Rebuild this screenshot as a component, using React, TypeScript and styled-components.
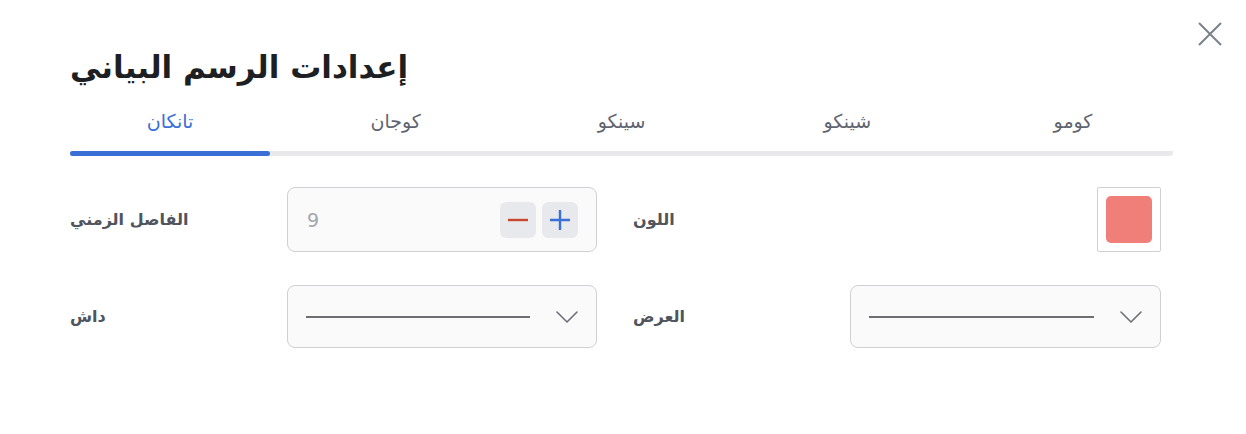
import React, { useState } from "react";
import styled, { createGlobalStyle } from "styled-components";

const GlobalStyle = createGlobalStyle`
  html, body {
    margin: 0;
    padding: 0;
    background: #ffffff;
    font-family: "DejaVu Sans", "Noto Sans", sans-serif;
  }
`;

const Dialog = styled.div`
  position: relative;
  width: 1246px;
  height: 434px;
  box-sizing: border-box;
  padding: 45px 73px 0 70px;
  background: #fff;
`;

const CloseButton = styled.button`
  position: absolute;
  top: 22px;
  right: 24px;
  width: 24px;
  height: 24px;
  padding: 0;
  border: none;
  background: transparent;
  color: #7c808a;
  cursor: pointer;
  display: flex;
  align-items: center;
  justify-content: center;
`;

const Title = styled.h1`
  margin: 0;
  font-size: 31px;
  font-weight: 700;
  color: #1d1f23;
  line-height: 44px;
`;

const Tabs = styled.div`
  margin-top: 20px;
  display: flex;
  justify-content: space-between;
  background: linear-gradient(#e9e9eb, #e9e9eb) no-repeat left bottom / 100% 5px;
  border-radius: 3px;
`;

const Tab = styled.button<{ $active: boolean }>`
  width: 200px;
  border: none;
  background: transparent;
  padding: 0;
  font-family: inherit;
  font-size: 19px;
  color: ${(p) => (p.$active ? "#3a6fd6" : "#5f6470")};
  cursor: pointer;
  &::after {
    content: "";
    display: block;
    height: 5px;
    margin-top: 18px;
    border-radius: 3px;
    background: ${(p) => (p.$active ? "#3a6fd6" : "transparent")};
  }
`;

const TabLabel = styled.span`
  display: block;
  line-height: 24px;
`;

const Form = styled.div`
  margin-top: 31px;
  width: 1091px;
  display: grid;
  grid-template-columns: 217px 310px 36px 217px 311px;
  row-gap: 33px;
  align-items: center;
`;

const Label = styled.label<{ $col: number }>`
  grid-column: ${(p) => p.$col};
  font-size: 16px;
  font-weight: 700;
  color: #50545d;
`;

const Field = styled.div<{ $col: number; $h: number }>`
  grid-column: ${(p) => p.$col};
  height: ${(p) => p.$h}px;
  box-sizing: border-box;
  border: 1px solid #cfd0d4;
  border-radius: 8px;
  background: #fafafa;
  display: flex;
  align-items: center;
`;

const NumberField = styled(Field)`
  padding: 0 18px 0 19px;
  gap: 6px;
`;

const NumberValue = styled.span`
  flex: 1;
  font-size: 19px;
  color: #a2a6ad;
`;

const StepButton = styled.button<{ $tone: string }>`
  width: 36px;
  height: 36px;
  padding: 0;
  border: none;
  border-radius: 6px;
  background: #e8e9ec;
  color: ${(p) => p.$tone};
  display: flex;
  align-items: center;
  justify-content: center;
  cursor: pointer;
`;

const SelectField = styled(Field)`
  padding: 0 18px 0 18px;
  gap: 26px;
  cursor: pointer;
`;

const LineSample = styled.span`
  flex: 1;
  height: 2px;
  background: #6e6e72;
`;

const SwatchCell = styled.div`
  grid-column: 5;
  display: flex;
  justify-content: flex-end;
`;

const SwatchBox = styled.div`
  width: 64px;
  height: 65px;
  box-sizing: border-box;
  border: 1px solid #cfd0d4;
  border-radius: 2px;
  padding: 8px;
`;

const Swatch = styled.div<{ $color: string }>`
  width: 100%;
  height: 100%;
  border-radius: 5px;
  background: ${(p) => p.$color};
`;

const Chevron = () => (
  <svg width="22" height="12" viewBox="0 0 22 12" fill="none">
    <path d="M1 1l10 10L21 1" stroke="#6e7079" strokeWidth="1.6" strokeLinecap="round" strokeLinejoin="round" />
  </svg>
);

const tabs = ["تانكان", "كوجان", "سينكو", "شينكو", "كومو"];

export default function App() {
  const [active, setActive] = useState(0);
  const [interval, setInterval] = useState(9);

  return (
    <>
      <GlobalStyle />
      <Dialog>
        <CloseButton aria-label="close">
          <svg width="24" height="24" viewBox="0 0 24 24" fill="none">
            <path d="M1 1l22 22M23 1L1 23" stroke="currentColor" strokeWidth="2" />
          </svg>
        </CloseButton>
        <Title>إعدادات الرسم البياني</Title>
        <Tabs>
          {tabs.map((t, i) => (
            <Tab key={t} $active={i === active} onClick={() => setActive(i)}>
              <TabLabel>{t}</TabLabel>
            </Tab>
          ))}
        </Tabs>
        <Form>
          <Label $col={1}>الفاصل الزمني</Label>
          <NumberField $col={2} $h={65}>
            <NumberValue>{interval}</NumberValue>
            <StepButton $tone="#c9482d" onClick={() => setInterval(interval - 1)}>
              <svg width="22" height="22" viewBox="0 0 22 22">
                <path d="M1 11h20" stroke="currentColor" strokeWidth="2.4" />
              </svg>
            </StepButton>
            <StepButton $tone="#3a6fd6" onClick={() => setInterval(interval + 1)}>
              <svg width="22" height="22" viewBox="0 0 22 22">
                <path d="M1 11h20M11 1v20" stroke="currentColor" strokeWidth="2.4" />
              </svg>
            </StepButton>
          </NumberField>
          <Label $col={4}>اللون</Label>
          <SwatchCell>
            <SwatchBox>
              <Swatch $color="#f07f79" />
            </SwatchBox>
          </SwatchCell>

          <Label $col={1}>داش</Label>
          <SelectField $col={2} $h={63}>
            <LineSample />
            <Chevron />
          </SelectField>
          <Label $col={4}>العرض</Label>
          <SelectField $col={5} $h={63}>
            <LineSample />
            <Chevron />
          </SelectField>
        </Form>
      </Dialog>
    </>
  );
}
